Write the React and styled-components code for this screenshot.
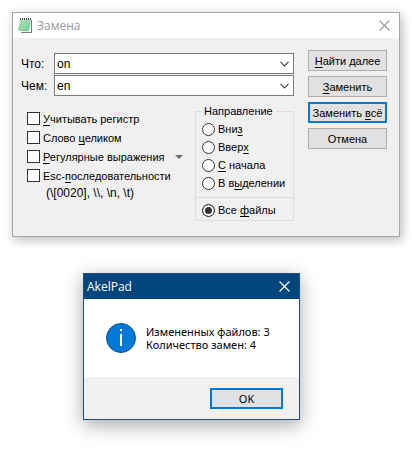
import React, { useState } from 'react';
import styled, { createGlobalStyle } from 'styled-components';

const GlobalStyle = createGlobalStyle`
  *, *::before, *::after {
    box-sizing: border-box;
  }

  body {
    margin: 0;
    background-color: #ffffff;
    color: #000000;
    font-family: 'Liberation Sans', Arial, sans-serif;
    font-size: 11px;
  }

  button, select, input {
    margin: 0;
    font: inherit;
    color: inherit;
  }
`;

const Desktop = styled.main`
  display: flex;
  flex-direction: column;
  align-items: flex-start;
  gap: 36px;
  padding: 12px 12px 40px;
`;

const ReplaceDialog = styled.section`
  width: 100%;
  border: 1px solid #a6a6a6;
  background-color: #f0f0f0;
  box-shadow: 2px 3px 10px rgba(0, 0, 0, 0.28);
`;

const MessageDialog = styled.section`
  width: 217px;
  margin-left: 71px;
  border: 1px solid #1b4f7c;
  background-color: #ffffff;
  box-shadow: 0 5px 18px rgba(0, 0, 0, 0.35);
  font-family: 'Noto Sans', 'Open Sans', sans-serif;
`;

const TitleBar = styled.header`
  display: flex;
  align-items: center;
  gap: 4px;
  height: 25px;
  padding: 0 8px 0 ${(props) => (props.$active ? '3px' : '4px')};
  background-color: ${(props) => (props.$active ? '#00457c' : '#ffffff')};
  color: ${(props) => (props.$active ? '#ffffff' : '#999999')};
  font-family: 'Open Sans', 'Noto Sans', sans-serif;
`;

const Title = styled.h1`
  flex: 1;
  margin: 0;
  font-size: 12px;
  font-weight: 400;
  line-height: 16px;
`;

const CloseButton = styled.button`
  display: flex;
  padding: 1px;
  border: none;
  background: none;
`;

const DialogBody = styled.div`
  display: flex;
  align-items: flex-start;
  gap: 14px;
  padding: 12px 12px 15px 8px;
`;

const FormArea = styled.div`
  flex: 1;
  min-width: 0;
  padding-top: 3px;
`;

const FieldRow = styled.div`
  display: flex;
  align-items: center;
  height: 22px;
  font-size: 12px;
`;

const FieldLabel = styled.label`
  width: 33px;
`;

const ComboBox = styled.div`
  display: grid;
  flex: 1;
  align-items: center;
  height: 21px;
  margin-bottom: 1px;
  border: 1px solid #7a7a7a;
  background-color: #ffffff;

  > * {
    grid-area: 1 / 1;
  }

  svg {
    justify-self: end;
    margin-right: 4px;
    pointer-events: none;
  }
`;

const Select = styled.select`
  width: 100%;
  height: 19px;
  padding: 0 20px 0 2px;
  border: none;
  outline: none;
  appearance: none;
  background: none;
`;

const Options = styled.div`
  display: flex;
  margin-top: 8px;
`;

const CheckList = styled.div`
  flex: 1;
  min-width: 0;
  padding: 4px 12px 0 6px;
`;

const CheckRow = styled.div`
  display: flex;
  align-items: center;
  justify-content: space-between;
  height: 19px;
`;

const OptionLabel = styled.label`
  display: flex;
  align-items: center;
  gap: 3px;
  height: ${(props) => (props.$radio ? '18px' : '19px')};
  padding-left: ${(props) => (props.$radio ? '6px' : '0')};
  white-space: nowrap;
`;

const Check = styled.input`
  flex: none;
  width: 13px;
  height: 13px;
  border: 1px solid #333333;
  appearance: none;
  background-color: #ffffff;

  &:checked {
    background-color: #333333;
    box-shadow: inset 0 0 0 2px #ffffff;
  }
`;

const Radio = styled(Check)`
  border-radius: 50%;
`;

const Hint = styled.p`
  margin: 0;
  padding-left: 19px;
  font-size: 12px;
  line-height: 16px;
`;

const MenuButton = styled.button`
  display: flex;
  padding: 0;
  border: none;
  background: none;
`;

const Group = styled.fieldset`
  flex: none;
  width: 99px;
  min-width: 0;
  margin: 0;
  padding: 2px 0 1px;
  border: 1px solid #dcdcdc;
`;

const Legend = styled.legend`
  margin-left: 6px;
  padding: 0 3px 0 2px;
  line-height: 13px;
`;

const Separator = styled.hr`
  margin: 5px 0 3px;
  border: none;
  border-top: 1px solid #dcdcdc;
`;

const ButtonColumn = styled.div`
  display: flex;
  flex: none;
  flex-direction: column;
  gap: 5px;
  width: 79px;
`;

const Button = styled.button`
  height: 21px;
  padding: 0;
  border: ${(props) => (props.$default ? '2px solid #0078d7' : '1px solid #adadad')};
  background-color: #e1e1e1;
  line-height: 16px;
  white-space: nowrap;
`;

const Key = styled.span`
  text-decoration: underline;
  text-decoration-skip-ink: none;
  text-underline-offset: 2px;
`;

const Message = styled.div`
  display: flex;
  align-items: center;
  gap: 10px;
  height: 78px;
  padding: 0 22px;
`;

const MessageText = styled.p`
  margin: 0;
  line-height: 13px;
  white-space: nowrap;
`;

const MessageFooter = styled.footer`
  display: flex;
  justify-content: flex-end;
  padding: 11px 16px 10px;
  background-color: #f0f0f0;

  ${Button} {
    width: 73px;
  }
`;

function NotepadIcon() {
  return (
    <svg width="16" height="17" viewBox="0 0 16 17" aria-hidden="true">
      <defs>
        <linearGradient id="sheet" x1="0" y1="0" x2="1" y2="1">
          <stop offset="0" stopColor="#b9ecc5" />
          <stop offset="1" stopColor="#62c584" />
        </linearGradient>
      </defs>
      <path d="M4 2H14.5V15.5H4.5L3 14Z" fill="#f8f8f8" />
      <path d="M14.5 3V15.5H4" fill="none" stroke="#777777" />
      <path d="M3 2.5H13.5Q13.5 10 11.5 14Q6 15 .5 13Q2.5 9 3 2.5Z" fill="url(#sheet)" />
      <path d="M3 5Q8 6 13 5M2.5 8Q7 9 13 8M2 11Q7 12 12 11" fill="none" stroke="#9be0ae" strokeWidth=".6" />
      <path d="M3.5 1V3M5.5 1V3M7.5 1V3M9.5 1V3M11.5 1V3M13.5 1V3" stroke="#444f47" />
    </svg>
  );
}

function CloseIcon() {
  return (
    <svg width="11" height="11" viewBox="0 0 11 11" aria-hidden="true">
      <path d="M.5.5L10.5 10.5M10.5.5L.5 10.5" stroke="currentColor" strokeWidth="1.1" />
    </svg>
  );
}

function InfoIcon() {
  return (
    <svg width="30" height="30" viewBox="0 0 30 30" aria-hidden="true">
      <circle cx="15" cy="15" r="14.5" fill="#0078d7" stroke="#125089" />
      <path d="M14 11H16V23H14Z" fill="#ffffff" />
      <path d="M14 6H16V8H14Z" fill="#ffffff" />
    </svg>
  );
}

function Combo({ id, label, value }) {
  return (
    <FieldRow>
      <FieldLabel htmlFor={id}>{label}</FieldLabel>
      <ComboBox>
        <Select id={id} defaultValue={value}>
          <option value={value}>{value}</option>
        </Select>
        <svg width="9" height="6" viewBox="0 0 9 6" aria-hidden="true">
          <path d="M.5.8L4.5 4.8L8.5.8" fill="none" stroke="#444444" strokeWidth="1.2" />
        </svg>
      </ComboBox>
    </FieldRow>
  );
}

// Caption with its access key underlined
function Caption({ text, at }) {
  return (
    <span>
      {text.slice(0, at)}
      <Key>{text[at]}</Key>
      {text.slice(at + 1)}
    </span>
  );
}

const checks = [
  { id: 'case', text: 'Учитывать регистр', at: 0 },
  { id: 'word', text: 'Слово целиком', at: 6 },
  { id: 'regexp', text: 'Регулярные выражения', at: 0, menu: true },
  { id: 'esc', text: 'Esc-последовательности', at: 4 },
];

const directions = [
  { id: 'down', text: 'Вниз', at: 3 },
  { id: 'up', text: 'Вверх', at: 4 },
  { id: 'begin', text: 'С начала', at: 0 },
  { id: 'selection', text: 'В выделении', at: 3 },
  { id: 'all', text: 'Все файлы', at: 4, separated: true },
];

function App() {
  const [direction, setDirection] = useState('all');

  return (
    <>
      <GlobalStyle />
      <Desktop>
        <ReplaceDialog>
          <TitleBar>
            <NotepadIcon />
            <Title>Замена</Title>
            <CloseButton type="button" aria-label="Закрыть">
              <CloseIcon />
            </CloseButton>
          </TitleBar>
          <DialogBody>
            <FormArea>
              <Combo id="what" label="Что:" value="on" />
              <Combo id="with" label="Чем:" value="en" />
              <Options>
                <CheckList>
                  {checks.map((item) => (
                    <CheckRow key={item.id}>
                      <OptionLabel>
                        <Check type="checkbox" name={item.id} />
                        <Caption text={item.text} at={item.at} />
                      </OptionLabel>
                      {item.menu && (
                        <MenuButton type="button" aria-label="Меню">
                          <svg width="8" height="4" viewBox="0 0 8 4" aria-hidden="true">
                            <path d="M0 0H8L4 4Z" fill="#6d6d6d" />
                          </svg>
                        </MenuButton>
                      )}
                    </CheckRow>
                  ))}
                  <Hint>{'(\\[0020], \\\\, \\n, \\t)'}</Hint>
                </CheckList>
                <Group>
                  <Legend>Направление</Legend>
                  {directions.map((item) => (
                    <React.Fragment key={item.id}>
                      {item.separated && <Separator />}
                      <OptionLabel $radio>
                        <Radio
                          type="radio"
                          name="direction"
                          checked={direction === item.id}
                          onChange={() => setDirection(item.id)}
                        />
                        <Caption text={item.text} at={item.at} />
                      </OptionLabel>
                    </React.Fragment>
                  ))}
                </Group>
              </Options>
            </FormArea>
            <ButtonColumn>
              <Button type="button"><Caption text="Найти далее" at={0} /></Button>
              <Button type="button"><Caption text="Заменить" at={0} /></Button>
              <Button type="button" $default><Caption text="Заменить всё" at={9} /></Button>
              <Button type="button">Отмена</Button>
            </ButtonColumn>
          </DialogBody>
        </ReplaceDialog>

        <MessageDialog>
          <TitleBar $active>
            <Title>AkelPad</Title>
            <CloseButton type="button" aria-label="Закрыть">
              <CloseIcon />
            </CloseButton>
          </TitleBar>
          <Message>
            <InfoIcon />
            <MessageText>
              Измененных файлов: 3
              <br />
              Количество замен: 4
            </MessageText>
          </Message>
          <MessageFooter>
            <Button type="button" $default>OK</Button>
          </MessageFooter>
        </MessageDialog>
      </Desktop>
    </>
  );
}

export default App;
